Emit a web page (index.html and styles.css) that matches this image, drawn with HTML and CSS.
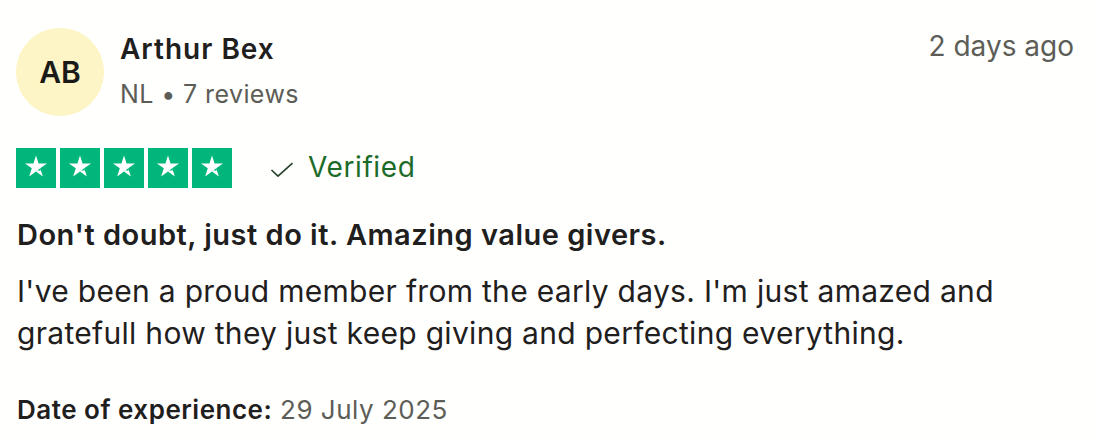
FILE: index.html
```html
<!DOCTYPE html>
<html>
<head>
<meta charset="utf-8">
<link rel="stylesheet" href="styles.css">
</head>
<body>
<article class="review">
  <header class="head">
    <div class="avatar">AB</div>
    <div class="who">
      <div class="name">Arthur Bex</div>
      <div class="meta">NL • 7 reviews</div>
    </div>
    <div class="when">2 days ago</div>
  </header>
  <div class="rating">
    <div class="stars">
      <span class="star"><svg viewBox="0 0 40 40"><path d="M20 7.4L22.6 15.42L31.03 15.42L24.21 20.37L26.82 28.38L20 23.43L13.18 28.38L15.79 20.37L8.97 15.42L17.4 15.42Z" fill="#fff"/><path d="M24.21 20.37L24.9 22.5L21.3 22.6Z" fill="#00b67a"/></svg></span>
      <span class="star"><svg viewBox="0 0 40 40"><path d="M20 7.4L22.6 15.42L31.03 15.42L24.21 20.37L26.82 28.38L20 23.43L13.18 28.38L15.79 20.37L8.97 15.42L17.4 15.42Z" fill="#fff"/><path d="M24.21 20.37L24.9 22.5L21.3 22.6Z" fill="#00b67a"/></svg></span>
      <span class="star"><svg viewBox="0 0 40 40"><path d="M20 7.4L22.6 15.42L31.03 15.42L24.21 20.37L26.82 28.38L20 23.43L13.18 28.38L15.79 20.37L8.97 15.42L17.4 15.42Z" fill="#fff"/><path d="M24.21 20.37L24.9 22.5L21.3 22.6Z" fill="#00b67a"/></svg></span>
      <span class="star"><svg viewBox="0 0 40 40"><path d="M20 7.4L22.6 15.42L31.03 15.42L24.21 20.37L26.82 28.38L20 23.43L13.18 28.38L15.79 20.37L8.97 15.42L17.4 15.42Z" fill="#fff"/><path d="M24.21 20.37L24.9 22.5L21.3 22.6Z" fill="#00b67a"/></svg></span>
      <span class="star"><svg viewBox="0 0 40 40"><path d="M20 7.4L22.6 15.42L31.03 15.42L24.21 20.37L26.82 28.38L20 23.43L13.18 28.38L15.79 20.37L8.97 15.42L17.4 15.42Z" fill="#fff"/><path d="M24.21 20.37L24.9 22.5L21.3 22.6Z" fill="#00b67a"/></svg></span>
    </div>
    <div class="verified">
      <svg class="check" viewBox="0 0 24 16"><path d="M1.5 8l6.5 6.2L22.5 1.2" fill="none" stroke="#24402a" stroke-width="1.6"/></svg>
      <span>Verified</span>
    </div>
  </div>
  <h2 class="title">Don't doubt, just do it. Amazing value givers.</h2>
  <p class="body">I've been a proud member from the early days. I'm just amazed and gratefull how they just keep giving and perfecting everything.</p>
  <p class="date"><b>Date of experience:</b> 29 July 2025</p>
</article>
</body>
</html>
```
FILE: styles.css
```css
html, body {
  margin: 0;
  padding: 0;
  background: #fffffd;
}
.review {
  padding: 28px 22px 0 16px;
  font-family: Inter, "Noto Sans", sans-serif;
  color: #1f201d;
}
.head {
  display: flex;
  align-items: flex-start;
}
.avatar {
  width: 88px;
  height: 88px;
  border-radius: 50%;
  background: #fdf5c6;
  display: flex;
  align-items: center;
  justify-content: center;
  font-size: 30px;
  font-weight: 600;
  color: #1a1b18;
  flex: none;
}
.who {
  margin-left: 16px;
  flex: 1;
}
.name {
  font-size: 28px;
  font-weight: 600;
  line-height: 36px;
  margin-top: 3px;
  letter-spacing: 1px;
}
.meta {
  font-size: 25px;
  line-height: 34px;
  margin-top: 10px;
  color: #5d5d58;
  letter-spacing: 0.4px;
}
.when {
  font-size: 28px;
  line-height: 36px;
  color: #5d5d58;
}
.rating {
  display: flex;
  align-items: center;
  margin-top: 32px;
}
.stars {
  display: flex;
  gap: 4px;
}
.star {
  width: 40px;
  height: 40px;
  background: #00b67a;
  display: block;
}
.star svg {
  width: 40px;
  height: 40px;
  display: block;
}
.verified {
  display: flex;
  align-items: center;
  margin-left: 38px;
  padding-bottom: 2px;
  color: #1c6b28;
  font-size: 28px;
  line-height: 34px;
  letter-spacing: 0.6px;
}
.check {
  width: 24px;
  height: 16px;
  margin-right: 14px;
  margin-top: 6px;
}
.title {
  font-size: 29px;
  font-weight: 600;
  margin: 29px 0 0 1px;
  line-height: 36px;
  letter-spacing: 0.5px;
  color: #1f201d;
}
.body {
  font-size: 30px;
  line-height: 42px;
  margin: 17px 0 0 1px;
  max-width: 1040px;
  letter-spacing: 0.3px;
  color: #1f201d;
}
.date {
  margin: 39px 0 0 1px;
  font-size: 26px;
  line-height: 34px;
  color: #5d5d58;
  letter-spacing: 0.5px;
}
.date b {
  font-weight: 600;
  color: #1f201d;
}
```
